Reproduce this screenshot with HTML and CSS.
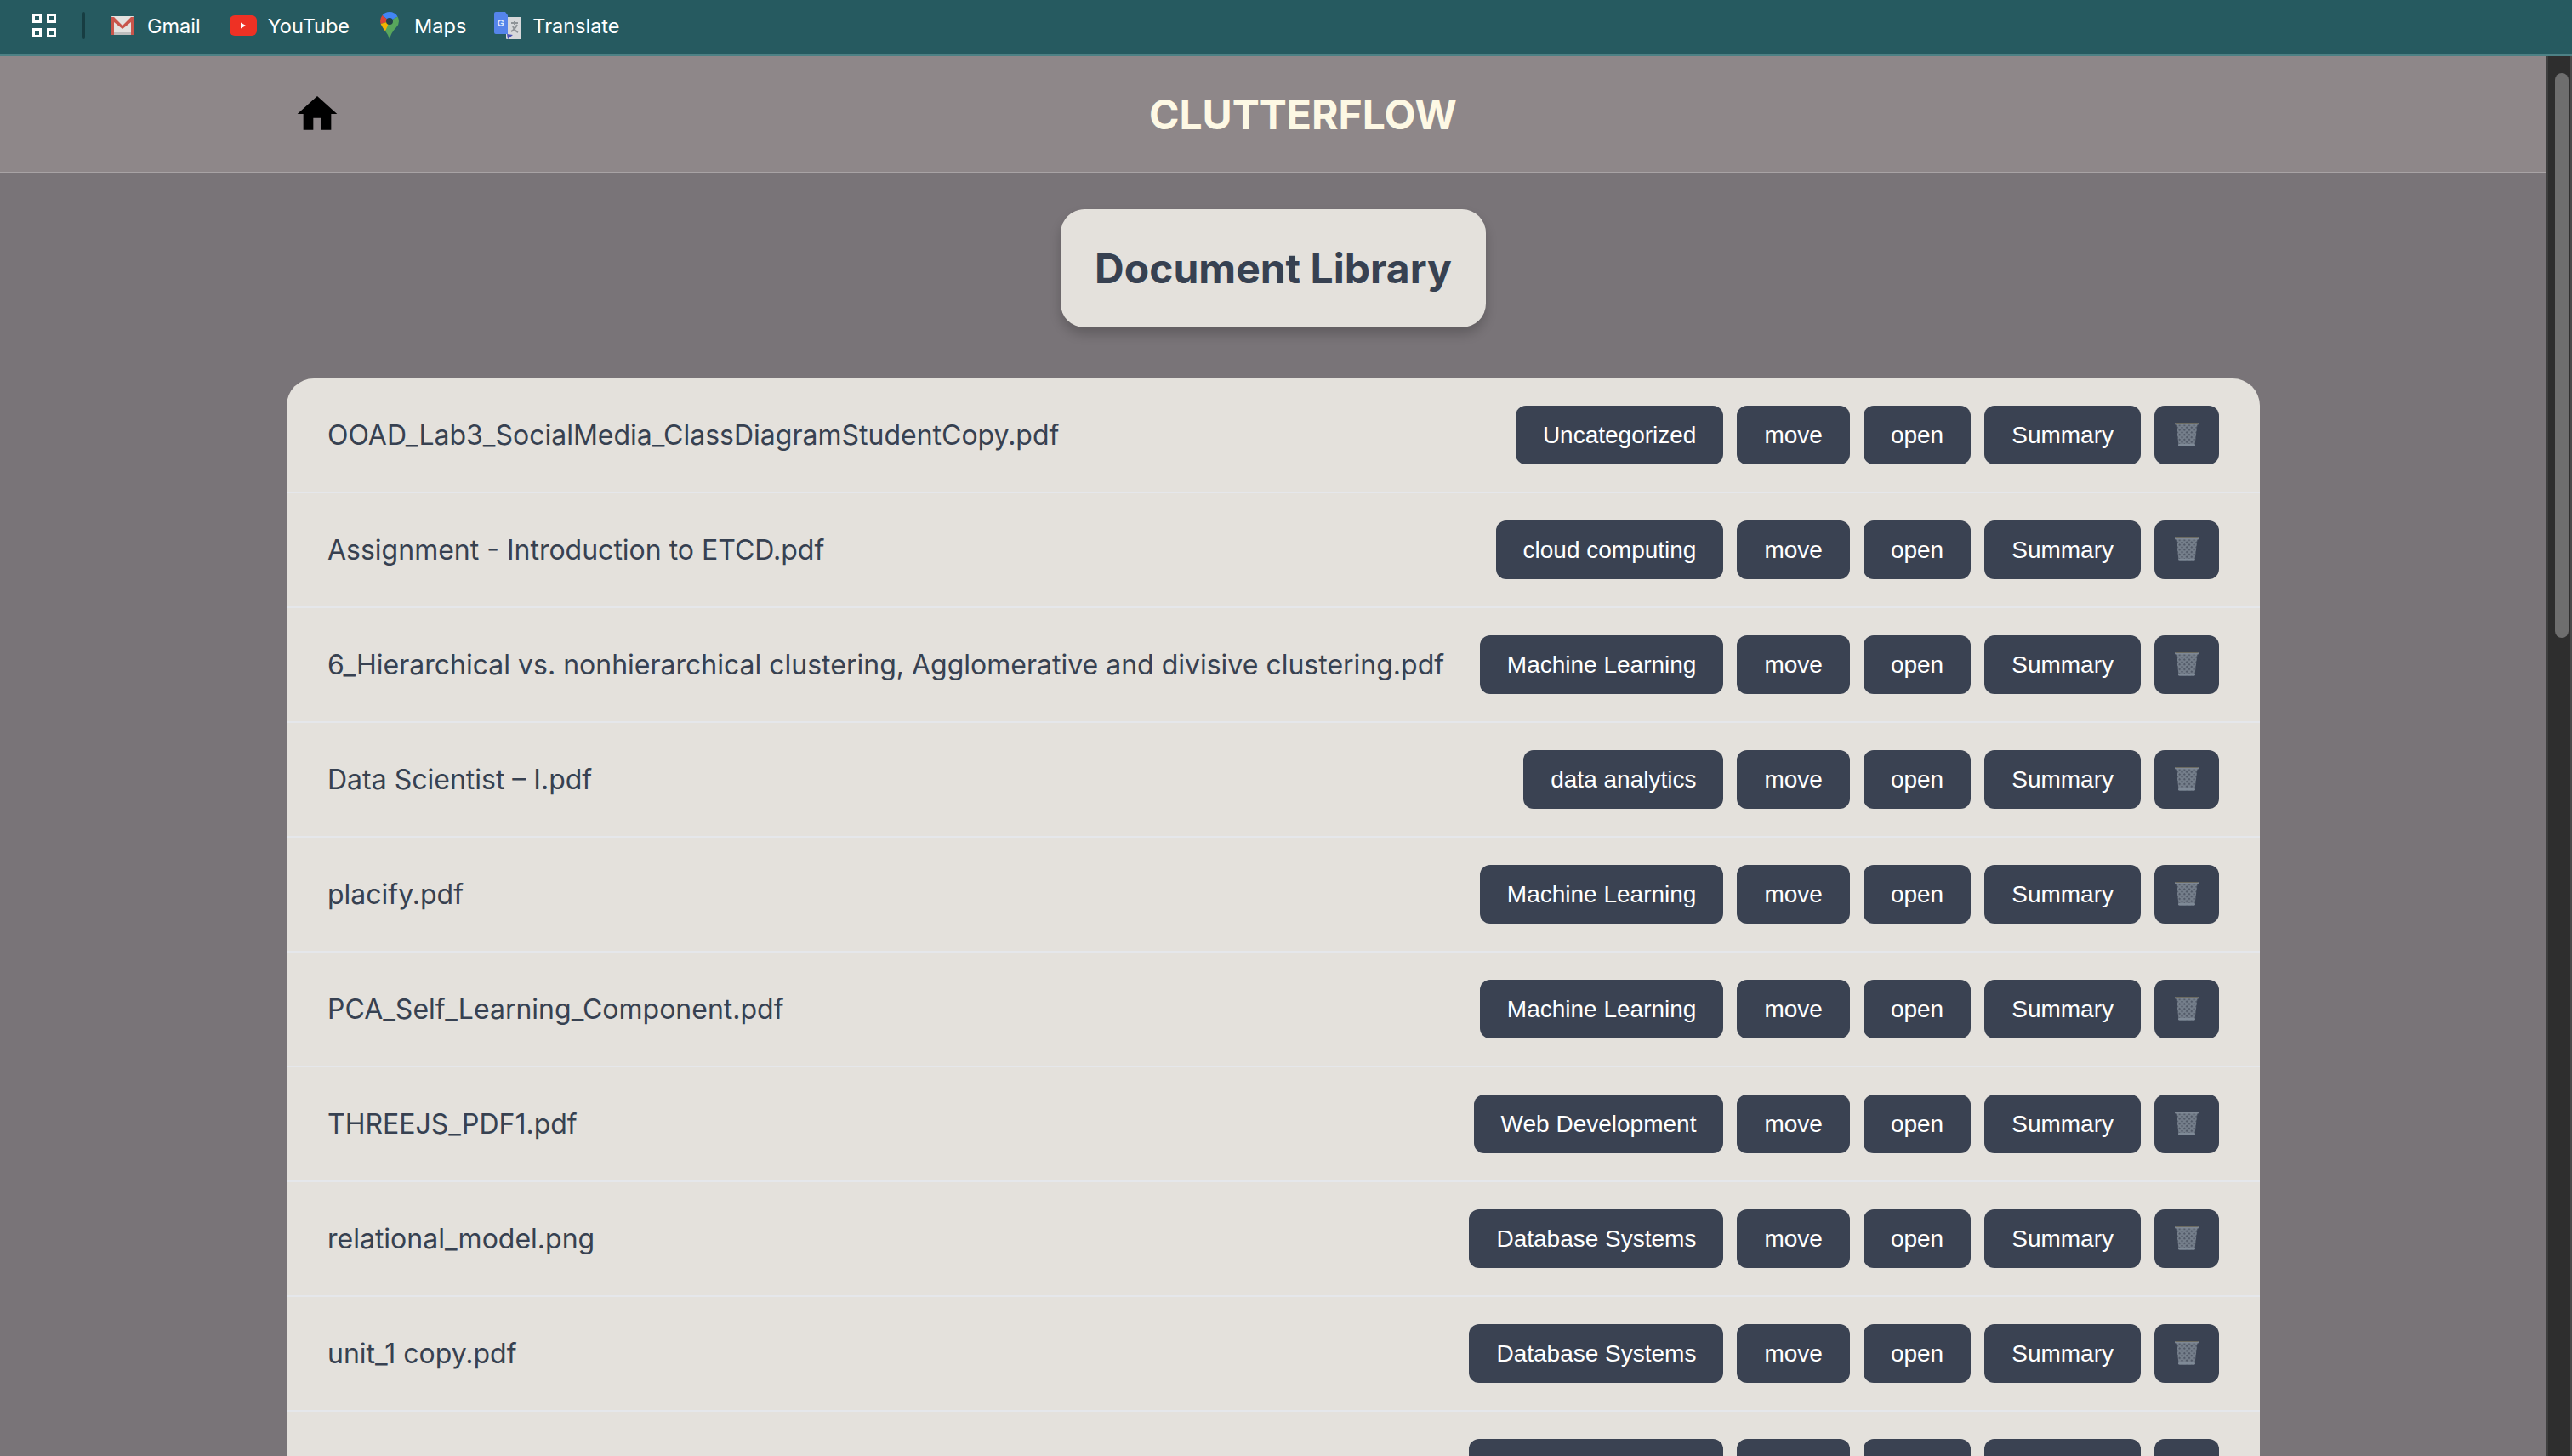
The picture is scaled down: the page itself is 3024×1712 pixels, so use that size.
FILE: index.html
```html
<!DOCTYPE html>
<html lang="en">
<head>
    <meta charset="UTF-8">
    <title>Clutterflow</title>
    <link rel="stylesheet" href="styles.css">
</head>
<body>
    <svg class="sprites" width="0" height="0">
        <defs>
            <pattern id="mesh" width="4" height="4" patternUnits="userSpaceOnUse" patternTransform="rotate(45)">
                <rect width="4" height="4" fill="#76808c"/>
                <rect x="1" y="1" width="2.2" height="2.2" fill="#525a68"/>
            </pattern>
            <symbol id="trash" viewBox="0 0 28 28">
                <path d="M1.5 2 H26.5 L23.5 26 Q23.4 27.5 21.5 27.5 H6.5 Q4.6 27.5 4.5 26 Z" fill="url(#mesh)"/>
                <rect x="0" y="0" width="28" height="2.5" rx="1" fill="#7f8894"/>
                <rect x="0.5" y="0" width="27" height="1" fill="#6b6a60"/>
                <rect x="4" y="25" width="20" height="2.5" rx="1" fill="#7f8a97"/>
            </symbol>
        </defs>
    </svg>

    <div class="bookmarks">
        <svg class="apps-icon" width="28" height="28" viewBox="0 0 28 28">
            <g fill="none" stroke="#fff" stroke-width="3">
                <rect x="1.5" y="1.5" width="8" height="8"/>
                <rect x="18.5" y="1.5" width="8" height="8"/>
                <rect x="1.5" y="18.5" width="8" height="8"/>
                <rect x="18.5" y="18.5" width="8" height="8"/>
            </g>
        </svg>
        <span class="bar-divider"></span>
        <a class="bookmark bookmark-gmail">
            <svg width="28" height="22" viewBox="0 0 28 22">
                <rect width="28" height="22" rx="2" fill="#e4e2e0"/>
                <path d="M0 1 H4 L14 11 L24 1 H28 V22 H24 V7 L14 15 L4 7 V22 H0 Z" fill="#c9554b"/>
                <rect x="4" y="19" width="20" height="3" fill="#bdbdbd"/>
            </svg>
            Gmail
        </a>
        <a class="bookmark bookmark-youtube">
            <svg width="32" height="24" viewBox="0 0 32 24">
                <rect width="32" height="24" rx="6" fill="#ee3124"/>
                <path d="M13 8.5 L19 12 L13 15.5 Z" fill="#fff"/>
            </svg>
            YouTube
        </a>
        <a class="bookmark bookmark-maps">
            <svg width="22" height="32" viewBox="0 0 22 32">
                <path d="M11 0 A11 11 0 0 1 20.5 5.5 L11 11 Z" fill="#4285f4"/>
                <path d="M11 0 A11 11 0 0 0 2.5 4 L11 11 Z" fill="#4285f4"/>
                <path d="M2.5 4 A11 11 0 0 0 0.6 14 L11 11 Z" fill="#db4437"/>
                <path d="M0.6 14 Q3 19 6 22.5 L14 11 L11 11 Z" fill="#f4b400"/>
                <path d="M20.5 5.5 A11 11 0 0 1 19 18 Q13 24 11 32 Q9 26 6 22.5 L11 11 Z" fill="#58a65c"/>
                <circle cx="11" cy="11" r="4" fill="#22424a"/>
            </svg>
            Maps
        </a>
        <a class="bookmark bookmark-translate">
            <svg width="32" height="32" viewBox="0 0 32 32">
                <rect x="14" y="6" width="18" height="26" rx="1" fill="#d6d8da"/>
                <path d="M20 13 H28 M24 11 V15 M27 15 Q24 21 20 23 M22 17 Q24 22 28 24" fill="none" stroke="#8f9498" stroke-width="2"/>
                <path d="M15 26 L16 32 L22 27 Z" fill="#4a53b5"/>
                <path d="M2 0 H13 L16 4 L16 26 H2 Q0 26 0 24 V2 Q0 0 2 0 Z" fill="#5584ea"/>
                <text x="3.5" y="17" class="translate-g">G</text>
            </svg>
            Translate
        </a>
    </div>

    <div class="viewport">
        <div class="page">
            <header class="site-header">
                <a class="home-link">
                    <svg width="56" height="56" viewBox="0 0 24 24"><path d="M10 20v-6h4v6h5v-8h3L12 3 2 12h3v8z"/></svg>
                </a>
                <div class="site-title">CLUTTERFLOW</div>
            </header>

            <main class="content">
                <h1 class="library-title">Document Library</h1>

                <div class="doc-list">
                    <div class="doc-row">
                        <span class="doc-name">OOAD_Lab3_SocialMedia_ClassDiagramStudentCopy.pdf</span>
                        <div class="doc-actions">
                            <button class="btn">Uncategorized</button>
                            <button class="btn">move</button>
                            <button class="btn">open</button>
                            <button class="btn">Summary</button>
                            <button class="btn btn-trash"><svg width="28" height="28"><use href="#trash"/></svg></button>
                        </div>
                    </div>
                    <div class="doc-row">
                        <span class="doc-name">Assignment - Introduction to ETCD.pdf</span>
                        <div class="doc-actions">
                            <button class="btn">cloud computing</button>
                            <button class="btn">move</button>
                            <button class="btn">open</button>
                            <button class="btn">Summary</button>
                            <button class="btn btn-trash"><svg width="28" height="28"><use href="#trash"/></svg></button>
                        </div>
                    </div>
                    <div class="doc-row">
                        <span class="doc-name">6_Hierarchical vs. nonhierarchical clustering, Agglomerative and divisive clustering.pdf</span>
                        <div class="doc-actions">
                            <button class="btn">Machine Learning</button>
                            <button class="btn">move</button>
                            <button class="btn">open</button>
                            <button class="btn">Summary</button>
                            <button class="btn btn-trash"><svg width="28" height="28"><use href="#trash"/></svg></button>
                        </div>
                    </div>
                    <div class="doc-row">
                        <span class="doc-name">Data Scientist – I.pdf</span>
                        <div class="doc-actions">
                            <button class="btn">data analytics</button>
                            <button class="btn">move</button>
                            <button class="btn">open</button>
                            <button class="btn">Summary</button>
                            <button class="btn btn-trash"><svg width="28" height="28"><use href="#trash"/></svg></button>
                        </div>
                    </div>
                    <div class="doc-row">
                        <span class="doc-name">placify.pdf</span>
                        <div class="doc-actions">
                            <button class="btn">Machine Learning</button>
                            <button class="btn">move</button>
                            <button class="btn">open</button>
                            <button class="btn">Summary</button>
                            <button class="btn btn-trash"><svg width="28" height="28"><use href="#trash"/></svg></button>
                        </div>
                    </div>
                    <div class="doc-row">
                        <span class="doc-name">PCA_Self_Learning_Component.pdf</span>
                        <div class="doc-actions">
                            <button class="btn">Machine Learning</button>
                            <button class="btn">move</button>
                            <button class="btn">open</button>
                            <button class="btn">Summary</button>
                            <button class="btn btn-trash"><svg width="28" height="28"><use href="#trash"/></svg></button>
                        </div>
                    </div>
                    <div class="doc-row">
                        <span class="doc-name">THREEJS_PDF1.pdf</span>
                        <div class="doc-actions">
                            <button class="btn">Web Development</button>
                            <button class="btn">move</button>
                            <button class="btn">open</button>
                            <button class="btn">Summary</button>
                            <button class="btn btn-trash"><svg width="28" height="28"><use href="#trash"/></svg></button>
                        </div>
                    </div>
                    <div class="doc-row">
                        <span class="doc-name">relational_model.png</span>
                        <div class="doc-actions">
                            <button class="btn">Database Systems</button>
                            <button class="btn">move</button>
                            <button class="btn">open</button>
                            <button class="btn">Summary</button>
                            <button class="btn btn-trash"><svg width="28" height="28"><use href="#trash"/></svg></button>
                        </div>
                    </div>
                    <div class="doc-row">
                        <span class="doc-name">unit_1 copy.pdf</span>
                        <div class="doc-actions">
                            <button class="btn">Database Systems</button>
                            <button class="btn">move</button>
                            <button class="btn">open</button>
                            <button class="btn">Summary</button>
                            <button class="btn btn-trash"><svg width="28" height="28"><use href="#trash"/></svg></button>
                        </div>
                    </div>
                    <div class="doc-row">
                        <span class="doc-name"></span>
                        <div class="doc-actions">
                            <button class="btn">Database Systems</button>
                            <button class="btn">move</button>
                            <button class="btn">open</button>
                            <button class="btn">Summary</button>
                            <button class="btn btn-trash"><svg width="28" height="28"><use href="#trash"/></svg></button>
                        </div>
                    </div>
                </div>
            </main>
        </div>

        <div class="scrollbar">
            <div class="scroll-thumb"></div>
        </div>
    </div>
</body>
</html>
```

FILE: styles.css
```css
* {
    box-sizing: border-box;
}
html, body {
    height: 100%;
}
body {
    margin: 0;
    overflow: hidden;
    font-family: "Inter", "Liberation Sans", sans-serif;
    background-color: #797478;
    display: flex;
    flex-direction: column;
}
.sprites {
    position: absolute;
}

/* browser bookmarks bar */
.bookmarks {
    height: 66px;
    flex-shrink: 0;
    display: flex;
    align-items: center;
    padding: 0 0 4px 38px;
    background-color: #265a60;
    border-bottom: 2px solid #4d8185;
    color: #fff;
    font-size: 23.5px;
}
.bar-divider {
    width: 4px;
    height: 32px;
    margin: 0 30px;
    border-radius: 2px;
    background-color: #173d42;
}
.bookmark {
    display: flex;
    align-items: center;
    white-space: nowrap;
}
.bookmark-gmail {
    margin-right: 34px;
}
.bookmark-gmail svg {
    margin-right: 15px;
}
.bookmark-youtube {
    margin-right: 36px;
}
.bookmark-youtube svg {
    margin-right: 13px;
}
.bookmark-maps {
    margin-right: 33px;
}
.bookmark-maps svg {
    margin-right: 18px;
}
.bookmark-translate svg {
    margin-right: 13px;
}
.translate-g {
    font-family: "Inter", sans-serif;
    font-size: 11px;
    font-weight: 700;
    fill: #dfe8fb;
    stroke: none;
}

.viewport {
    flex: 1;
    display: flex;
    min-height: 0;
}
.page {
    flex: 1;
    min-width: 0;
    overflow: hidden;
}

/* header */
.site-header {
    height: 138px;
    display: flex;
    align-items: center;
    padding: 0 337px 0 345px;
    background-color: #8e8789;
    border-bottom: 2px solid #a8a3a5;
}
.home-link {
    display: flex;
    width: 56px;
}
.site-title {
    flex: 1;
    text-align: center;
    font-size: 48px;
    font-weight: 700;
    color: #fdf8e4;
    padding-left: 6px;
}

/* main */
.content {
    padding: 42px 337px 0;
    display: flex;
    flex-direction: column;
    align-items: center;
}
.library-title {
    margin: 0 0 60px;
    width: 500px;
    height: 139px;
    display: flex;
    align-items: center;
    justify-content: center;
    background-color: #e4e1dc;
    color: #374151;
    font-size: 48px;
    font-weight: 700;
    border-radius: 28px;
    box-shadow: 0 8px 14px rgba(0, 0, 0, 0.2);
}
.doc-list {
    width: 100%;
    background-color: #e4e1dc;
    border-radius: 32px;
}
.doc-row {
    display: flex;
    align-items: center;
    justify-content: space-between;
    padding: 32px 48px;
    border-bottom: 2px solid #e5e7eb;
}
.doc-name {
    font-size: 32px;
    color: #374151;
    white-space: nowrap;
}
.doc-actions {
    display: flex;
    gap: 16px;
}
.btn {
    height: 69px;
    padding: 0 32px;
    border: none;
    border-radius: 12px;
    background-color: #3a4252;
    color: #fff;
    font-family: "Liberation Sans", Arial, sans-serif;
    font-size: 28px;
    white-space: nowrap;
}
.btn-trash {
    width: 76px;
    padding: 0 0 2px;
    display: flex;
    align-items: center;
    justify-content: center;
}

/* scrollbar */
.scrollbar {
    width: 30px;
    flex-shrink: 0;
    padding: 20px 6px 0 8px;
    background-color: #2e2e2e;
    border-left: 2px solid #3f3f3f;
    border-right: 2px solid #4a4a4a;
}
.scroll-thumb {
    width: 16px;
    height: 664px;
    border-radius: 8px;
    background-color: #6e6e6e;
}
```
